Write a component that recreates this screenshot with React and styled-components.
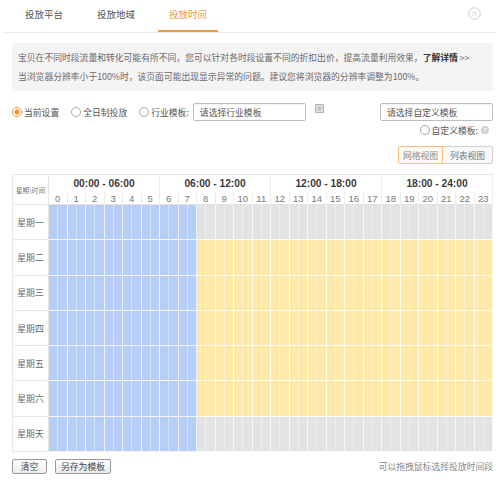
import React from "react";
import styled, { createGlobalStyle } from "styled-components";

const GlobalStyle = createGlobalStyle`
  body {
    margin: 0;
    background: #fff;
    font-family: "Noto Sans CJK SC", "Noto Sans", sans-serif;
    color: #555;
  }
  * { box-sizing: border-box; }
`;

const ORANGE = "#f39a38";
const COLORS = { blue: "#b6cdf6", yellow: "#fee9a8", gray: "#e3e3e3" };

const DAYS = ["星期一", "星期二", "星期三", "星期四", "星期五", "星期六", "星期天"];
const GROUPS = ["00:00 - 06:00", "06:00 - 12:00", "12:00 - 18:00", "18:00 - 24:00"];

function cellColor(day, half) {
  if (half < 16) return "blue";
  if (day === 0 || day === 6) return "gray";
  return "yellow";
}

export default function App() {
  return (
    <Page>
      <GlobalStyle />
      <TabBar>
        <Tab>投放平台</Tab>
        <Tab>投放地域</Tab>
        <Tab $active>投放时间</Tab>
        <CloseButton>
          <svg viewBox="0 0 14 14" width="13" height="13">
            <circle cx="7" cy="7" r="6.2" fill="none" stroke="#c8c8c8" strokeWidth="1" />
            <path d="M4.8 4.8 L9.2 9.2 M9.2 4.8 L4.8 9.2" stroke="#c8c8c8" strokeWidth="1" />
          </svg>
        </CloseButton>
      </TabBar>

      <Body>
        <Notice>
          <p>
            宝贝在不同时段流量和转化可能有所不同，您可以针对各时段设置不同的折扣出价，提高流量利用效果，
            <Strong>了解详情</Strong> &gt;&gt;
          </p>
          <p>当浏览器分辨率小于100%时，该页面可能出现显示异常的问题。建议您将浏览器的分辨率调整为100%。</p>
        </Notice>

        <Controls>
          <LeftGroup>
            <RadioLabel>
              <Radio $checked />
              当前设置
            </RadioLabel>
            <RadioLabel>
              <Radio />
              全日制投放
            </RadioLabel>
            <RadioLabel>
              <Radio />
              行业模板:
            </RadioLabel>
            <SelectBox $width={113}>请选择行业模板</SelectBox>
            <HelpSquare />
          </LeftGroup>
          <RightGroup>
            <SelectBox $width={113}>请选择自定义模板</SelectBox>
            <CustomRow>
              <RadioLabel>
                <Radio />
                自定义模板:
              </RadioLabel>
              <HintDot>?</HintDot>
            </CustomRow>
            <Toggle>
              <ToggleButton $active>网格视图</ToggleButton>
              <ToggleButton>列表视图</ToggleButton>
            </Toggle>
          </RightGroup>
        </Controls>

        <Schedule>
          <Corner>星期\时间</Corner>
          {GROUPS.map((g) => (
            <GroupHead key={g}>{g}</GroupHead>
          ))}
          {Array.from({ length: 24 }, (_, h) => (
            <HourHead key={h}>{h}</HourHead>
          ))}
          {DAYS.map((d, di) => (
            <React.Fragment key={d}>
              <DayLabel>{d}</DayLabel>
              {Array.from({ length: 48 }, (_, i) => (
                <Slot key={i} $color={COLORS[cellColor(di, i)]} $hourEnd={i % 2 === 1} />
              ))}
            </React.Fragment>
          ))}
        </Schedule>

        <Footer>
          <Buttons>
            <PlainButton $width={35}>清空</PlainButton>
            <PlainButton $width={56}>另存为模板</PlainButton>
          </Buttons>
          <Hint>可以拖拽鼠标选择投放时间段</Hint>
        </Footer>
      </Body>
    </Page>
  );
}

const Page = styled.div`
  width: 499px;
  height: 487px;
  background: #fff;
  font-size: 8.8px;
`;

const TabBar = styled.div`
  display: flex;
  align-items: stretch;
  height: 33px;
  padding-left: 5px;
  border-bottom: 1px solid #ececec;
  margin: 0 3px;
`;

const Tab = styled.div`
  width: 72px;
  display: flex;
  align-items: center;
  justify-content: center;
  font-size: 9.5px;
  color: ${(p) => (p.$active ? ORANGE : "#555")};
  position: relative;
  padding-bottom: 4px;

  &::after {
    content: "";
    display: ${(p) => (p.$active ? "block" : "none")};
    position: absolute;
    left: 6px;
    right: 6px;
    bottom: 0;
    height: 2px;
    background: ${ORANGE};
  }
`;

const CloseButton = styled.div`
  margin-left: auto;
  margin-right: 15px;
  display: flex;
  align-items: center;
  padding-bottom: 5px;
`;

const Body = styled.div`
  padding: 10px 6px 0 12px;
`;

const Notice = styled.div`
  background: #f4f4f4;
  padding: 5px 6px;
  color: #6a6a6a;
  line-height: 19px;

  p {
    margin: 0;
    white-space: nowrap;
  }
`;

const Strong = styled.span`
  color: #333;
  font-weight: bold;
`;

const Controls = styled.div`
  display: flex;
  justify-content: space-between;
  align-items: flex-start;
  margin-top: 12px;
`;

const LeftGroup = styled.div`
  display: flex;
  align-items: center;
  height: 18px;
`;

const RadioLabel = styled.label`
  display: flex;
  align-items: center;
  gap: 2px;
  margin-right: 12px;
  color: #555;
  white-space: nowrap;

  &:last-of-type {
    margin-right: 4px;
  }
`;

const Radio = styled.span`
  width: 10px;
  height: 10px;
  border-radius: 50%;
  border: 1px solid ${(p) => (p.$checked ? ORANGE : "#a8a8a8")};
  background: ${(p) =>
    p.$checked ? `radial-gradient(circle, ${ORANGE} 0 2.4px, #fff 2.8px)` : "#fff"};
`;

const SelectBox = styled.div`
  width: ${(p) => p.$width}px;
  height: 18px;
  border: 1px solid #bdbdbd;
  border-radius: 2px;
  padding-left: 6px;
  display: flex;
  align-items: center;
  color: #555;
  white-space: nowrap;
  box-shadow: inset 0 1px 1px rgba(0, 0, 0, 0.05);
`;

const HelpSquare = styled.span`
  width: 9px;
  height: 9px;
  margin-left: 9px;
  align-self: flex-start;
  margin-top: 1px;
  background: #c4c4c4;
  border: 1px solid #b0b0b0;
  border-radius: 1px;
  box-shadow: inset 0 0 0 1.5px #e2e2e2;
`;

const RightGroup = styled.div`
  display: flex;
  flex-direction: column;
  align-items: flex-end;
`;

const CustomRow = styled.div`
  display: flex;
  align-items: center;
  margin-top: 4px;
  margin-right: 4px;
  height: 10px;

  ${RadioLabel} {
    margin-right: 3px;
  }
`;

const HintDot = styled.span`
  width: 8px;
  height: 8px;
  border-radius: 50%;
  background: #d0d0d0;
  color: #fff;
  font-size: 6px;
  line-height: 8px;
  text-align: center;
  font-family: "Liberation Sans", sans-serif;
  font-weight: bold;
`;

const Toggle = styled.div`
  display: flex;
  margin-top: 11px;
`;

const ToggleButton = styled.div`
  height: 18px;
  padding: 0;
  display: flex;
  align-items: center;
  justify-content: center;
  white-space: nowrap;
  border: 1px solid ${(p) => (p.$active ? "#f6c27c" : "#cfcfcf")};
  background: ${(p) => (p.$active ? "#fffaf2" : "#f9f9f9")};
  color: ${(p) => (p.$active ? "#8c8c8c" : "#777")};
  border-radius: ${(p) => (p.$active ? "2px 0 0 2px" : "0 2px 2px 0")};
  margin-left: ${(p) => (p.$active ? "0" : "-1px")};
  width: ${(p) => (p.$active ? "45px" : "51px")};
  position: relative;
  z-index: ${(p) => (p.$active ? 1 : 0)};
`;

const Schedule = styled.div`
  margin-top: 10px;
  width: 481px;
  display: grid;
  grid-template-columns: 36px repeat(48, 1fr);
  grid-template-rows: 17px 13px repeat(7, 35.3px);
  border-top: 1px solid #e6e6e6;
  border-left: 1px solid #e6e6e6;
`;

const Corner = styled.div`
  grid-column: 1;
  grid-row: 1 / span 2;
  border-right: 1px solid #e6e6e6;
  border-bottom: 1px solid #e6e6e6;
  overflow: hidden;
  white-space: nowrap;
  padding-top: 1px;
  display: flex;
  align-items: center;
  justify-content: center;
  font-size: 6.6px;
  color: #777;
`;

const GroupHead = styled.div`
  grid-column: span 12;
  border-right: 1px solid #ececec;
  display: flex;
  align-items: center;
  justify-content: center;
  font-family: "Liberation Sans", Arial, sans-serif;
  font-weight: bold;
  font-size: 10.2px;
  color: #3a3a3a;
`;

const HourHead = styled.div`
  grid-column: span 2;
  grid-row: 2;
  border-right: 1px solid #ececec;
  border-bottom: 1px solid #e2e2e2;
  display: flex;
  align-items: center;
  justify-content: center;
  font-family: "Liberation Sans", Arial, sans-serif;
  font-size: 9.5px;
  color: #777;
`;

const DayLabel = styled.div`
  grid-column: 1;
  border-right: 1px solid #e6e6e6;
  border-bottom: 1px solid #e6e6e6;
  display: flex;
  align-items: center;
  justify-content: center;
  color: #6a6a6a;
`;

const Slot = styled.div`
  background: ${(p) => p.$color};
  border-right: 1px solid
    ${(p) => (p.$hourEnd ? "rgba(255,255,255,0.75)" : "rgba(255,255,255,0.4)")};
  border-bottom: 1.5px solid rgba(255, 255, 255, 0.85);
`;

const Footer = styled.div`
  display: flex;
  justify-content: space-between;
  align-items: center;
  margin-top: 7px;
`;

const Buttons = styled.div`
  display: flex;
  gap: 8px;
`;

const PlainButton = styled.button`
  width: ${(p) => p.$width}px;
  height: 15px;
  padding: 0;
  font: inherit;
  font-size: 8.8px;
  color: #444;
  border: 1px solid #9a9a9a;
  border-radius: 2px;
  background: linear-gradient(#ffffff, #ececec);
  display: flex;
  align-items: center;
  justify-content: center;
  white-space: nowrap;
`;

const Hint = styled.div`
  color: #888;
`;
